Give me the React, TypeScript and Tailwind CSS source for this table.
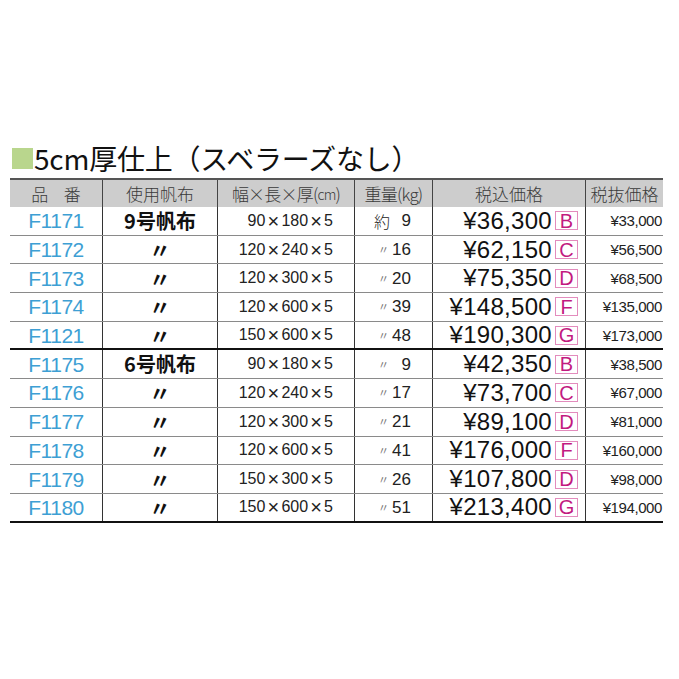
import React from 'react';

type Row = {
    code: string;
    cloth: string;
    dim: string;
    prefix: string;
    weight: string;
    price: string;
    size: string;
    net: string;
    groupEnd?: boolean;
};

const rows: Row[] = [
    { code: 'F1171', cloth: '9号帆布', dim: '90×180×5', prefix: '約', weight: '9', price: '¥36,300', size: 'B', net: '¥33,000' },
    { code: 'F1172', cloth: '〃', dim: '120×240×5', prefix: '〃', weight: '16', price: '¥62,150', size: 'C', net: '¥56,500' },
    { code: 'F1173', cloth: '〃', dim: '120×300×5', prefix: '〃', weight: '20', price: '¥75,350', size: 'D', net: '¥68,500' },
    { code: 'F1174', cloth: '〃', dim: '120×600×5', prefix: '〃', weight: '39', price: '¥148,500', size: 'F', net: '¥135,000' },
    { code: 'F1121', cloth: '〃', dim: '150×600×5', prefix: '〃', weight: '48', price: '¥190,300', size: 'G', net: '¥173,000', groupEnd: true },
    { code: 'F1175', cloth: '6号帆布', dim: '90×180×5', prefix: '〃', weight: '9', price: '¥42,350', size: 'B', net: '¥38,500' },
    { code: 'F1176', cloth: '〃', dim: '120×240×5', prefix: '〃', weight: '17', price: '¥73,700', size: 'C', net: '¥67,000' },
    { code: 'F1177', cloth: '〃', dim: '120×300×5', prefix: '〃', weight: '21', price: '¥89,100', size: 'D', net: '¥81,000' },
    { code: 'F1178', cloth: '〃', dim: '120×600×5', prefix: '〃', weight: '41', price: '¥176,000', size: 'F', net: '¥160,000' },
    { code: 'F1179', cloth: '〃', dim: '150×300×5', prefix: '〃', weight: '26', price: '¥107,800', size: 'D', net: '¥98,000' },
    { code: 'F1180', cloth: '〃', dim: '150×600×5', prefix: '〃', weight: '51', price: '¥213,400', size: 'G', net: '¥194,000' },
];

const cols = 'grid grid-cols-[93px_115px_137px_78px_153px_77px]';
const latin = "font-['Liberation_Sans','Noto_Sans_CJK_JP',sans-serif]";
const jp = "font-['Noto_Sans_CJK_JP',sans-serif]";

// 寸法: 「×」だけ広めに組む
const Dim: React.FC<{ value: string }> = ({ value }) => {
    const parts = value.split('×');
    return (
        <span className={`${latin} text-[16px] text-[#222] flex items-center`}>
            {parts.map((p, i) => (
                <React.Fragment key={i}>
                    {i > 0 && <span className="inline-block w-[16px] text-center text-[20px]">×</span>}
                    <span>{p}</span>
                </React.Fragment>
            ))}
        </span>
    );
};

export default function App() {
    return (
        <div className="w-[679px] h-[679px] bg-white pt-[144px]">
            <div className="flex items-center h-[28px] ml-[12px]">
                <div className="w-[21px] h-[21px] bg-[#b9d68d]" />
                <h1 className={`${jp} text-[28px] leading-none font-normal text-[#111] ml-[1px] tracking-[-0.2px]`}>
                    5cm厚仕上（スベラーズなし）
                </h1>
            </div>

            <div className="ml-[10px] w-[653px] mt-[6px] leading-none">
                <div className={`${cols} h-[29px] bg-[#cdcdcd] border-t-2 border-[#555] ${jp} font-light text-[17px] text-[#3a3a3a]`}>
                    <div className="flex items-center justify-center border-r border-[#444] tracking-[0.9em] pl-[0.9em]">品番</div>
                    <div className="flex items-center justify-center border-r border-[#444]">使用帆布</div>
                    <div className="flex items-center justify-center border-r border-[#444] tracking-[-0.8px]">
                        幅×長×厚(<span className="text-[14px]">cm</span>)
                    </div>
                    <div className="flex items-center justify-center border-r border-[#444] tracking-[-0.8px]">重量(kg)</div>
                    <div className="flex items-center justify-center border-r border-[#444]">税込価格</div>
                    <div className="flex items-center justify-center">税抜価格</div>
                </div>

                {rows.map((r, i) => {
                    const last = i === rows.length - 1;
                    const bottom = r.groupEnd || last ? 'border-b-2 border-b-[#111]' : 'border-b border-b-[#8a8a8a]';
                    return (
                        <div key={r.code} className={`${cols} h-[28.7px] ${bottom}`}>
                            <div className={`flex items-center justify-center border-r border-r-[#333] ${latin} text-[21px] text-[#3e9fd4] tracking-[-0.5px]`}>
                                {r.code}
                            </div>
                            <div className={`flex items-center justify-center border-r border-r-[#333] ${jp} font-bold text-[#111] ${r.cloth === '〃' ? 'text-[21px]' : 'text-[20px]'}`}>
                                {r.cloth}
                            </div>
                            <div className="flex items-center justify-end pr-[21px] border-r border-r-[#333]">
                                <Dim value={r.dim} />
                            </div>
                            <div className="flex items-center justify-end pr-[21px] border-r border-r-[#333] text-[#222]">
                                {r.prefix === '約' ? (
                                    <span className={`${jp} font-light text-[16px]`}>約</span>
                                ) : (
                                    <span className={`${jp} text-[11px] text-[#777] mr-[1px]`}>〃</span>
                                )}
                                <span className={`${latin} text-[17px] inline-block w-[21px] text-right`}>{r.weight}</span>
                            </div>
                            <div className="flex items-center justify-end pr-[7px] gap-[3px] border-r border-r-[#333]">
                                <span className={`${latin} text-[24px] text-[#111] tracking-[0.3px]`}>{r.price}</span>
                                <span className={`${latin} w-[23px] h-[19px] border border-[#e38cbd] text-[#c21a80] text-[20px] flex items-center justify-center`}>
                                    {r.size}
                                </span>
                            </div>
                            <div className={`flex items-center justify-end pr-[1px] ${latin} text-[15px] text-[#222] tracking-[-0.4px]`}>
                                {r.net}
                            </div>
                        </div>
                    );
                })}
            </div>
        </div>
    );
}
